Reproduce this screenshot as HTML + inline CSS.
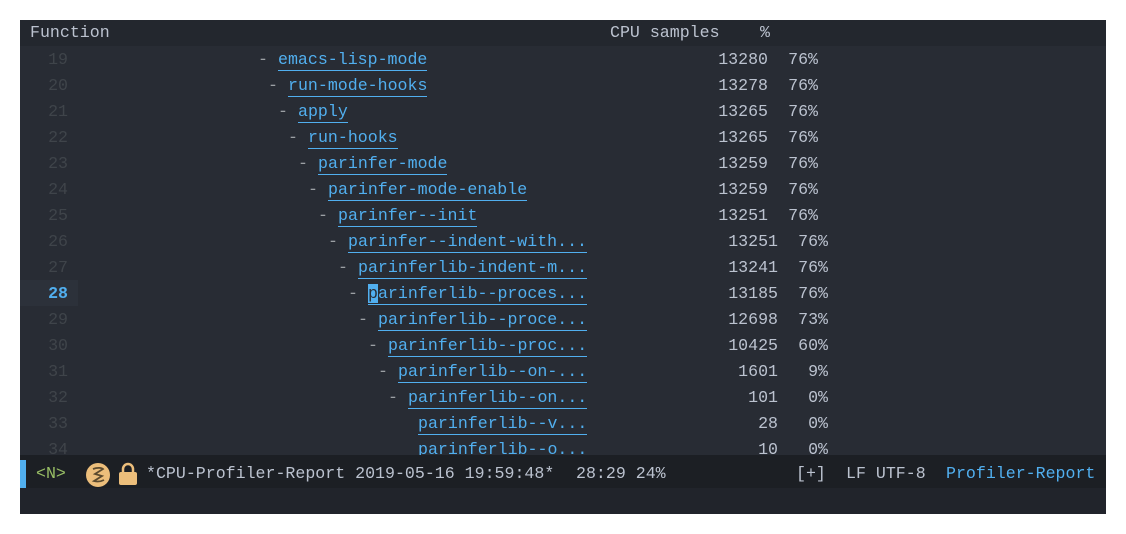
<!DOCTYPE html>
<html><head><style>
body{margin:0;width:1126px;height:534px;background:#fff;position:relative;overflow:hidden;font-family:"Liberation Mono",monospace;font-size:16.6px}
#w{position:absolute;left:20px;top:20px;width:1086px;height:494px;background:#21242b;overflow:hidden}
#hd{position:absolute;left:0;top:0;width:1086px;height:26px;background:#23272e;color:#bbc2cf}
#bd{position:absolute;left:0;top:26px;width:1086px;height:409px;background:#282c34;overflow:hidden}
#ml{position:absolute;left:0;top:435px;width:1086px;height:33px;background:#1c1f24;color:#bbc2cf}
.t{position:absolute;white-space:pre;line-height:26px}
.ln{color:#3f444a;text-align:right;width:40px;left:8px}
.d{color:#9ca0a4}
.n{color:#51afef;border-bottom:1px solid #51afef;line-height:21px}
.v{color:#bbc2cf;text-align:right}
</style></head><body><div id="w">
<div id="hd"><span class="t" style="left:10px">Function</span><span class="t" style="left:590px">CPU samples</span><span class="t" style="left:740px">%</span></div>
<div id="bd">
<div style="position:absolute;left:0;top:234px;width:58px;height:26px;background:#2c313a"></div>
<div id="rows"></div>
</div>
<div id="ml">
<div style="position:absolute;left:0;top:5px;width:6px;height:28px;background:#51afef"></div>
<span class="t" style="left:16px;top:6px;color:#98be65">&lt;N&gt;</span>
<svg style="position:absolute;left:65px;top:7px" width="26" height="26" viewBox="0 0 26 26"><circle cx="13" cy="13" r="12" fill="#ecbe7b"/><path d="M8 7 C13 5 17 6 18 7 L10 12 L17 14 L9 19 C13 20 17 19 19 18" stroke="#5b4a2e" stroke-width="1.8" fill="none"/></svg>
<svg style="position:absolute;left:98px;top:7px" width="20" height="24" viewBox="0 0 20 24"><path d="M5 11 V7 a5 5 0 0 1 10 0 V11" stroke="#ecbe7b" stroke-width="2.5" fill="none"/><rect x="1" y="10" width="18" height="13" rx="2" fill="#ecbe7b"/></svg>
<span class="t" style="left:126px;top:6px">*CPU-Profiler-Report 2019-05-16 19:59:48*</span>
<span class="t" style="left:556px;top:6px">28:29 24%</span>
<span class="t" style="left:776px;top:6px">[+]</span>
<span class="t" style="left:826px;top:6px">LF UTF-8</span>
<span class="t" style="left:926px;top:6px;color:#51afef">Profiler-Report</span>
</div>
</div>
<script>
var R=[[19,"emacs-lisp-mode",13280,"76%"],[20,"run-mode-hooks",13278,"76%"],[21,"apply",13265,"76%"],[22,"run-hooks",13265,"76%"],[23,"parinfer-mode",13259,"76%"],[24,"parinfer-mode-enable",13259,"76%"],[25,"parinfer--init",13251,"76%"],[26,"parinfer--indent-with...",13251,"76%"],[27,"parinferlib-indent-m...",13241,"76%"],[28,"parinferlib--proces...",13185,"76%"],[29,"parinferlib--proce...",12698,"73%"],[30,"parinferlib--proc...",10425,"60%"],[31,"parinferlib--on-...",1601,"9%"],[32,"parinferlib--on...",101,"0%"],[33,"parinferlib--v...",28,"0%"],[34,"parinferlib--o...",10,"0%"]];
var h="";R.forEach(function(r,i){var y=i*26+1;var n=r[0];var late=n>=26;
h+='<span class="t ln" style="top:'+y+'px;'+(n==28?'color:#51afef;font-weight:bold':'')+'">'+n+'</span>';
var nx;if(n<=32){var dx=238+10*(n-19);h+='<span class="t d" style="left:'+dx+'px;top:'+y+'px">-</span>';nx=dx+20;}else nx=398;
var nm=r[1];if(n==28)nm='<span style="background:#51afef;color:#282c34">p</span>'+nm.slice(1);
h+='<span class="t n" style="left:'+nx+'px;top:'+(y+2)+'px">'+nm+'</span>';
h+='<span class="t v" style="right:'+(late?328:338)+'px;top:'+y+'px">'+r[2]+'</span>';
h+='<span class="t v" style="right:'+(late?278:288)+'px;top:'+y+'px">'+r[3]+'</span>';});
document.getElementById("rows").innerHTML=h;
</script>
</body></html>
